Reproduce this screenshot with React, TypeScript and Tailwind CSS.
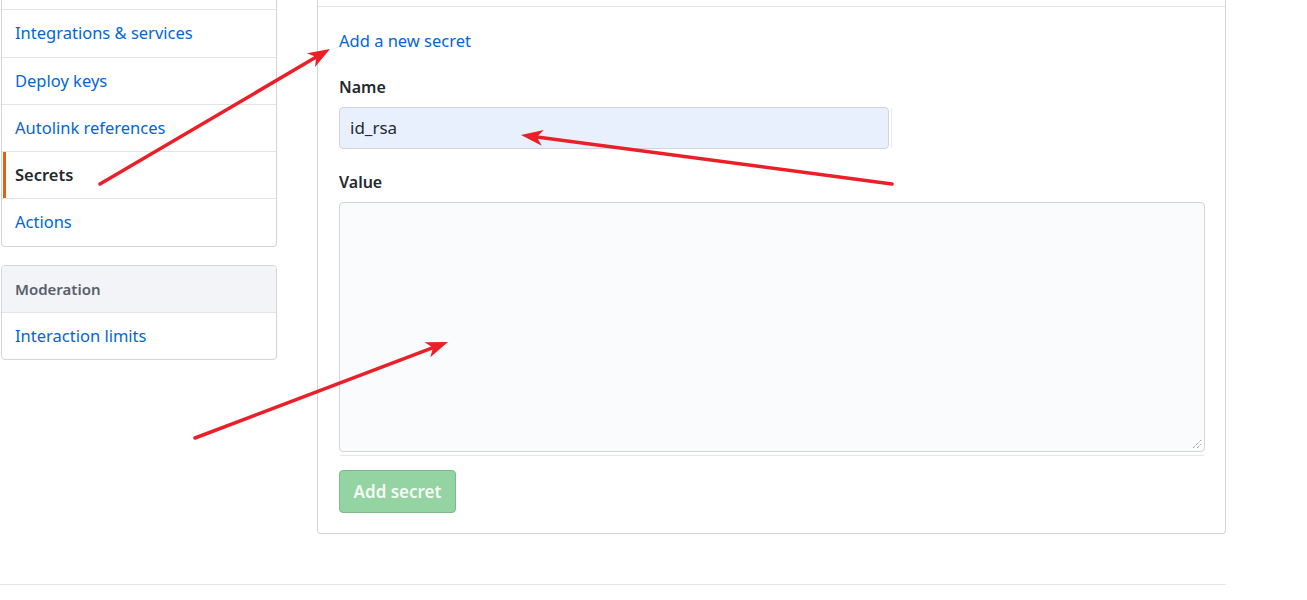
import React from 'react';

const font = { fontFamily: '"Noto Sans", "Open Sans", Arial, sans-serif' };

function Arrow({ x1, y1, x2, y2 }: { x1: number; y1: number; x2: number; y2: number }) {
  const dx = x2 - x1;
  const dy = y2 - y1;
  const len = Math.hypot(dx, dy);
  const ux = dx / len;
  const uy = dy / len;
  const px = -uy;
  const py = ux;
  const headLen = 22;
  const headW = 8;
  const bx = x2 - ux * headLen;
  const by = y2 - uy * headLen;
  const nx = x2 - ux * (headLen - 6);
  const ny = y2 - uy * (headLen - 6);
  const pts = [
    [x2, y2],
    [bx + px * headW, by + py * headW],
    [nx, ny],
    [bx - px * headW, by - py * headW],
  ]
    .map((p) => p.join(','))
    .join(' ');
  return (
    <g>
      <line x1={x1} y1={y1} x2={nx} y2={ny} stroke="#ea1f28" strokeWidth={3.5} strokeLinecap="round" />
      <polygon points={pts} fill="#ea1f28" />
    </g>
  );
}

function MenuItem({ label, active, tall }: { label: string; active?: boolean; tall?: boolean }) {
  return (
    <div
      className={
        'relative flex items-center border-b border-[#e1e4e8] px-[13px] text-[16.5px] last:border-b-0 ' +
        (tall ? 'h-[48px] ' : 'h-[47px] ') +
        (active ? 'font-semibold text-[#24292e]' : 'text-[#0366d6]')
      }
    >
      {active && <span className="absolute left-[1px] top-0 bottom-0 w-[3px] bg-[#e36209]" />}
      {label}
    </div>
  );
}

export default function App() {
  return (
    <div className="relative h-[600px] w-[1307px] overflow-hidden bg-white" style={font}>
      <div className="flex items-start pl-[1px]">
        <aside className="w-[276px] shrink-0">
          <div className="rounded-b-[4px] border-x border-b border-[#d1d5da]">
            <div className="h-[10px] border-b border-[#e1e4e8]" />
            <MenuItem label="Integrations & services" tall />
            <MenuItem label="Deploy keys" />
            <MenuItem label="Autolink references" />
            <MenuItem label="Secrets" active />
            <MenuItem label="Actions" />
          </div>
          <div className="mt-[18px] overflow-hidden rounded-[4px] border border-[#d1d5da]">
            <div className="flex h-[47px] items-center border-b border-[#e1e4e8] bg-[#f3f4f8] px-[13px] text-[15px] font-semibold text-[#586069]">
              Moderation
            </div>
            <div className="flex h-[46px] items-center px-[13px] text-[16.5px] text-[#0366d6]">Interaction limits</div>
          </div>
        </aside>

        <main className="ml-[40px] w-[909px] shrink-0 rounded-b-[4px] border-x border-b border-[#d1d5da]">
          <div className="h-[7px] border-b border-[#e1e4e8]" />
          <div className="px-[21px] pb-[20px] pt-[21px]">
            <div className="text-[16.5px] leading-[26px] text-[#0366d6]">Add a new secret</div>
            <div className="mt-[20px] text-[16px] font-semibold leading-[26px] text-[#24292e]">Name</div>
            <div className="mt-[7px] flex items-center">
              <div className="flex h-[42px] w-[550px] items-center rounded-[4px] border border-[#d1d5da] bg-[#e8f0fe] px-[10px] text-[17px] text-[#24292e]">
                id_rsa
              </div>
              <div className="ml-[2px] h-[40px] w-px bg-[#e3ecf7]" />
            </div>
            <div className="mt-[20px] text-[16px] font-semibold leading-[26px] text-[#24292e]">Value</div>
            <div className="relative mt-[7px] h-[250px] w-[866px] rounded-[4px] border border-[#d1d5da] bg-[#fafbfc]">
              <svg className="absolute bottom-[2px] right-[2px]" width="10" height="10" viewBox="0 0 10 10">
                <line x1="1" y1="9" x2="9" y2="1" stroke="#777" strokeWidth="1" strokeDasharray="1 1" />
                <line x1="5" y1="9" x2="9" y2="5" stroke="#777" strokeWidth="1" strokeDasharray="1 1" />
              </svg>
            </div>
            <div className="mt-[3px] ml-[1px] h-px w-[864px] bg-[#dde8f3]" />
            <div className="mt-[14px] flex h-[43px] w-[117px] items-center justify-center rounded-[4px] border border-[#7fb98b] bg-[#94d3a2] text-[17px] font-semibold text-[#f3fbf4]">
              Add secret
            </div>
          </div>
        </main>
      </div>

      <div className="ml-0 mt-[50px] h-px w-[1226px] bg-[#e1e4e8]" />

      <svg className="pointer-events-none absolute inset-0" width="1307" height="600">
        <Arrow x1={100} y1={184} x2={330} y2={49} />
        <Arrow x1={892} y1={184} x2={521} y2={135} />
        <Arrow x1={195} y1={438} x2={448} y2={342} />
      </svg>
    </div>
  );
}
